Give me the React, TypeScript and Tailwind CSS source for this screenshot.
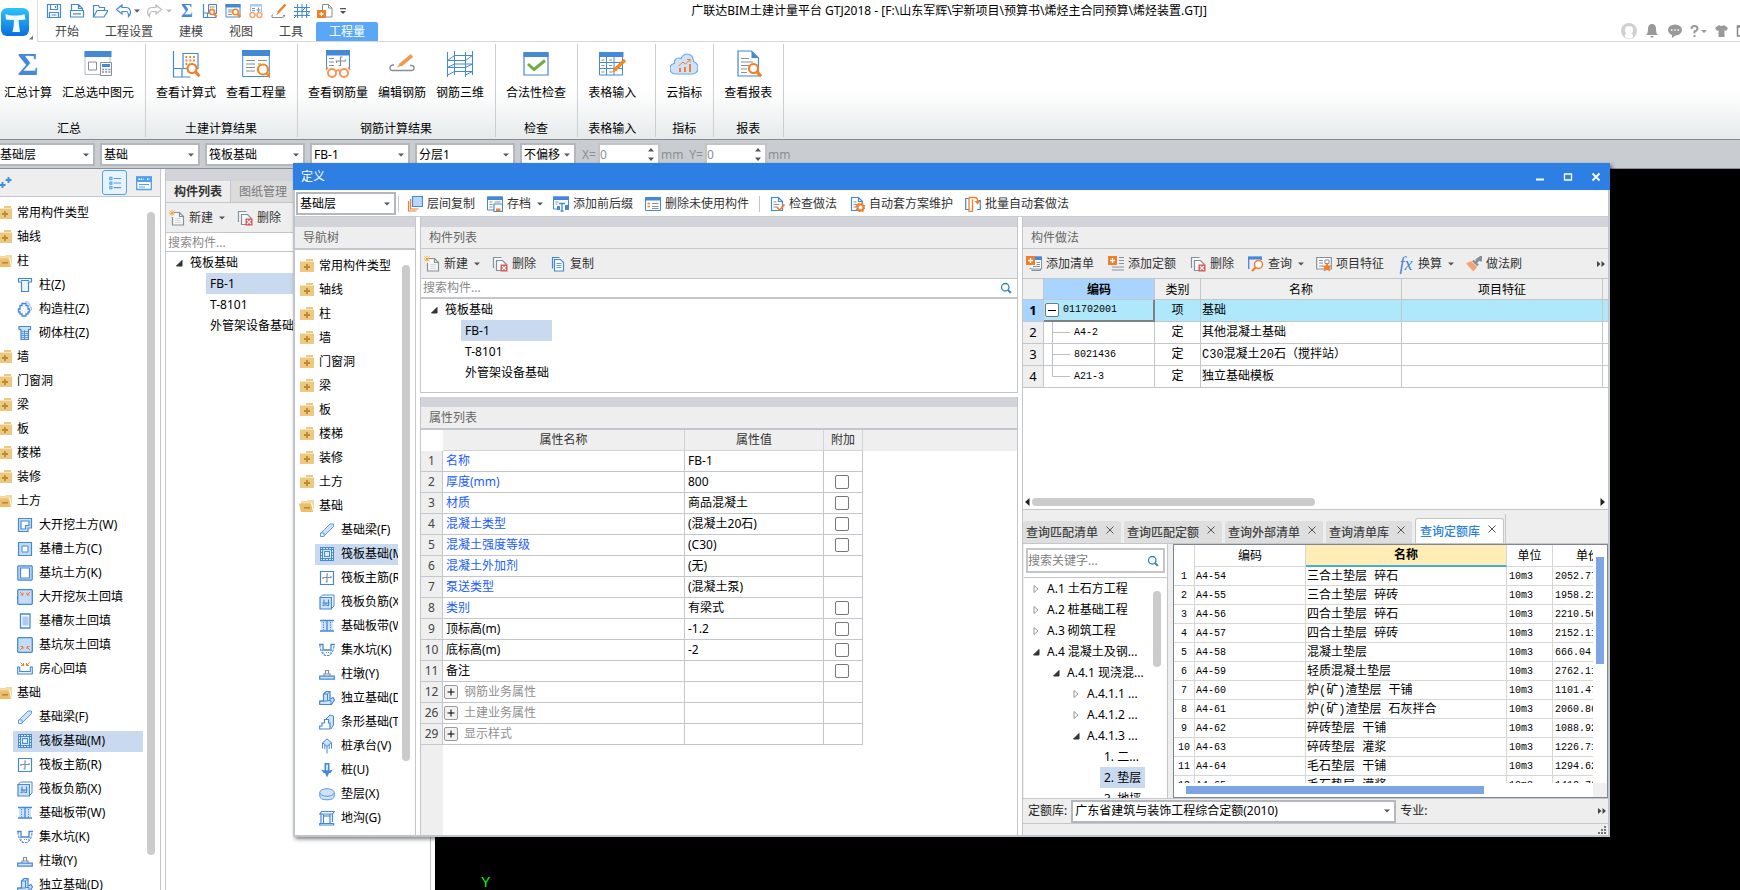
import type { ReactNode } from 'react';

const B = '#4488d8';
const L = '#cfe2f8';
const O = '#f07f2a';
const G = '#84909a';

const uiFont = "font-['Noto_Sans','Noto_Sans_CJK_SC',sans-serif]";
const gridFont = "font-['Liberation_Mono','Noto_Sans_CJK_SC',monospace]";

/* ---------- small icons, 16 x 16 ---------- */

const lens = (x: number, y: number, r: number, c = O) => (
  <g fill="none" stroke={c}>
    <circle cx={x} cy={y} r={r} fill="#fff" strokeWidth="1.6" />
    <path d={`M${x + r * 0.7} ${y + r * 0.7}l3 3`} strokeWidth="2.2" />
  </g>
);
const redX = (
  <g>
    <path d="M8.500 8.500h7v7h-7z" fill="#d9534f" />
    <path d="M10 10l4 4M14 10l-4 4" stroke="#fff" strokeWidth="1.2" />
  </g>
);
const plusBox = (
  <g>
    <path d="M0 0h9v9H0z" fill={O} />
    <path d="M4.500 2v5M2 4.500h5" stroke="#fff" strokeWidth="1.4" />
  </g>
);
const foldedPage = (
  <path d="M2.500 1.500h7l4 4v9h-11zM9.500 1.500v4h4" fill="#fff" stroke={B} strokeWidth="1.2" />
);

const icons: Record<string, ReactNode> = {
  closed: (
    <g>
      <path d="M7 1h7v2H7zM1 3.500h14v10.500H1z" fill="#edc880" />
      <path d="M8 6v6M5 9h6" stroke="#bf8a2e" strokeWidth="1.800" />
    </g>
  ),
  open: (
    <g>
      <path d="M2 3h6l1-1h6v11H2z" fill="#f3d9a2" />
      <path d="M0 5.500h12l2 8.500H2z" fill="#eabf6c" />
      <path d="M12.500 5l2 8" stroke="#fff" />
      <path d="M5 9.800h6" stroke="#bf8a2e" strokeWidth="1.600" />
    </g>
  ),
  save: (
    <g fill="none" stroke={B} strokeWidth="1.200">
      <path d="M1.500 1.500h13v13h-13zM4.500 1.500v5h7v-5M3.500 14.500v-5h9v5" />
      <path d="M9.500 3v2M5.500 12h5" />
    </g>
  ),
  newdoc: (
    <g fill="none" stroke={B} strokeWidth="1.200">
      <path d="M2.500 7V1.500h7l4 4V7M9.500 1.500v4h4M1.500 7.500h13v6.500h-13zM4 10.800h8" />
    </g>
  ),
  folder: (
    <path d="M1.500 14V2.500h5l1 2h5v3M1.500 14l3.500-6.500h11L12 14z" fill="none" stroke={B} strokeWidth="1.200" />
  ),
  undo: (
    <path d="M7 2L1.500 6.500 7 11V8.500h4q2.500 0 2.500 5 2-2 2-4.500-.5-4.500-4.500-4.500H7z" fill="none" stroke={B} strokeWidth="1.200" />
  ),
  redo: (
    <path d="M9 2l5.500 4.500L9 11V8.500H5q-2.500 0-2.500 5-2-2-2-4.500Q1 4.500 5 4.500h4z" fill="none" stroke="#bbbbbb" strokeWidth="1.200" />
  ),
  formula: (
    <g>
      <path d="M1.500 1v13.500h13M1.500 10h4v4" fill="none" stroke={B} strokeWidth="1.200" />
      <path d="M6.500 1.500h8v9h-8z" fill="#eef4fb" stroke={B} />
      <path d="M8 4h5M8 6.500h3" stroke={O} strokeWidth="1.300" strokeDasharray="1.300 1" />
      {lens(10, 9, 2.5)}
    </g>
  ),
  quantity: (
    <g>
      <path d="M1 1.500h14v12.500H1z" fill="#fff" stroke={B} />
      <path d="M.5 1h15v3.500H.5z" fill={B} />
      <path d="M3 7h5M3 9h4M3 11.500h4" stroke={G} />
      {lens(10.5, 9, 2.8, '#f08a1e')}
    </g>
  ),
  glasses: (
    <g fill="none">
      <path d="M2.500 9V1.500h11V9" stroke="#9fc2e8" />
      <path d="M2 1h12v2.500H2z" fill="#a9cbf0" />
      <path d="M4 5.500h3M4 7.500h3M10.500 4.500v5M8.500 7h4" stroke={G} />
      <circle cx="4.500" cy="12" r="2.500" stroke="#f5a56e" strokeWidth="1.400" />
      <circle cx="11.500" cy="12" r="2.500" stroke="#f5a56e" strokeWidth="1.400" />
      <path d="M7 12h2" stroke="#f5a56e" />
    </g>
  ),
  pen: (
    <g fill="none">
      <path d="M2 12h-1v2.500h9q4 0 4-2h-2" stroke={G} />
      <path d="M14.500 1.500L7 9.500" stroke={O} strokeWidth="2.400" />
      <path d="M7 9l-2 3 3-1.500z" fill={O} />
    </g>
  ),
  mesh: (
    <path d="M3.500 1v14M8 1v14M12.500 1v14M0 4.500h16M0 8.500h16M0 12.500h16M0 15L4 11M7.500 8.500l5-5M12 13l3.500-4" fill="none" stroke={B} />
  ),
  export: (
    <g>
      <path d="M5.500 7V1.500h6l3.500 3.500v9h-6M11.500 1.500V5H15" fill="none" stroke={G} />
      <path d="M0 7h9v8H0z" fill={O} />
      <path d="M4.500 9v4M2.500 11h4" stroke="#fff" strokeWidth="1.300" />
    </g>
  ),
  listview: (
    <g fill="none" stroke="#4ea0f0" strokeWidth="1.200">
      <path d="M2 1.500h2.500V4H2zM2 6.800h2.500v2.500H2zM2 12h2.500v2.500H2zM6.500 2.800H15M6.500 8H15M6.500 13.300H15" />
    </g>
  ),
  cardview: (
    <g>
      <path d="M.7 2h14.600v12.500H.7z" fill="#fff" stroke="#4ea0f0" strokeWidth="1.300" />
      <path d="M0 1.500h16v5.500H0z" fill="#4ea0f0" />
      <path d="M2.500 4.200h5M11 4.200h2.500" stroke="#fff" strokeWidth="1.500" strokeDasharray="1.500 .7" />
      <path d="M3 9.500h10M3 12h6" stroke="#4ea0f0" />
    </g>
  ),
  sparkle: (
    <path d="M10.500 2v6M7.500 5h6M4.500 7v6M1.500 10h6" stroke="#3f8fe0" strokeWidth="2" />
  ),
  create: (
    <g>
      <path d="M4.500 2.500h6l4 4v8.500H3.500V7" fill="#f7f8f9" stroke={G} strokeWidth="1.200" />
      <path d="M10.500 2.500v4h4" fill="none" stroke={G} strokeWidth="1.200" />
      <path d="M6 8.500h6M6 10.500h6M6 12.500h6" stroke="#d5d9dc" />
      <path d="M.5 .5l5 5M5.500 .5l-5 5M3 0v6M0 3h6" stroke="#f0a020" strokeWidth="1" strokeDasharray="1.300 .5" />
    </g>
  ),
  remove: (
    <g>
      <path d="M1.500 12V1.500h8M4.500 14.500v-10h6l3.500 3.500v6.500z" fill="#f7f8f9" stroke={G} strokeWidth="1.200" />
      {redX}
    </g>
  ),
  copy: (
    <g fill="#fff" stroke={B} strokeWidth="1.200">
      <path d="M2.500 12.500v-11h7" fill="none" />
      <path d="M4.500 3.500h6l3 3v8.500h-9z" />
      <path d="M6.500 7.500h5M6.500 9.500h5M6.500 11.500h5" stroke="#5b9be3" />
    </g>
  ),
  layercopy: (
    <g fill="none">
      <path d="M1.500 5v10h8" stroke={O} strokeWidth="1.200" />
      <path d="M3.500 3v10h8" stroke={O} strokeWidth="1.200" />
      <path d="M5.500 .5h10v10h-10z" fill="#bcd8f8" stroke={B} strokeWidth="1.200" />
    </g>
  ),
  archive: (
    <g>
      <path d="M.5 1h15v13H.5z" fill="#fff" stroke={B} />
      <path d="M0 .5h16v3.500H0z" fill={B} />
      <path d="M2.500 6h3M7.500 6h6M2.500 8.500h3M2.500 11h3" stroke={G} />
      <path d="M7 8h8.500v7.500H7z" fill="#fff" stroke={B} strokeWidth="1.200" />
      <path d="M9 12.500h4.500V15H9z" fill={O} />
    </g>
  ),
  affix: (
    <g>
      <path d="M.5 1h15v8M.5 1v12h5" fill="none" stroke={B} />
      <path d="M0 .5h16V4H0z" fill={B} />
      <path d="M2.500 6h3M2.500 8h2" stroke={G} />
      <path d="M6 7.500h6M9 7.500V15M7.500 15h3" stroke={B} strokeWidth="1.300" />
      <path d="M4 10h3v4H4zM12 9h4v5h-4z" fill={B} />
    </g>
  ),
  unused: (
    <g>
      <path d="M.5 2h15v12.500H.5z" fill="#fff" stroke={B} />
      <path d="M0 1h16v3.500H0z" fill={B} />
      <path d="M2.500 7.500h2.500M2.500 10.500h2.500" stroke={O} strokeWidth="1.500" />
      <path d="M7 7.500h6.500M7 10.500h6.500M7 12.500h6.500" stroke={G} />
    </g>
  ),
  check: (
    <g>
      {foldedPage}
      <path d="M4.500 6h3M4.500 8.500h6M4.500 11h4" stroke={G} />
      <path d="M8 11l2.500 3 5-5.500" fill="none" stroke={O} strokeWidth="1.600" />
    </g>
  ),
  scheme: (
    <g>
      {foldedPage}
      <path d="M4.500 6h3M4.500 8.500h4M4.500 11h3" stroke={G} />
      <circle cx="11.500" cy="11.500" r="3" fill="#fff" stroke={O} strokeWidth="2" />
      <circle cx="11.500" cy="11.500" r="4.300" fill="none" stroke={O} strokeWidth="1.400" strokeDasharray="1.700 1.700" />
    </g>
  ),
  batch: (
    <g fill="none">
      <path d="M4 2.500H.7v11H4M12 5l3.300-.5v9H12" stroke={B} strokeWidth="1.200" />
      <path d="M4 1.500h6q2.500 0 2.500 3.500M4 1.500v14h3.500V3.500" stroke={O} strokeWidth="1.300" />
      <path d="M9.500 5h6l-3 3.500z" fill={O} />
    </g>
  ),
  addlist: (
    <g>
      <path d="M5.500 14.500h9v-9M3.500 12.500h9" fill="none" stroke={G} />
      <path d="M9 1h6.500v12H5" fill="#fff" stroke={G} />
      <path d="M9 .5h7V4H9z" fill={B} />
      <path d="M10.500 6.500h3.500M10.500 8.500h3.500M7 10.500h7" stroke={G} />
      {plusBox}
    </g>
  ),
  addquota: (
    <g>
      <path d="M11 1.500h5M11 4.500h5M11 7.500h5M4 11h12M4 14h12" stroke={G} strokeWidth="1.200" />
      {plusBox}
    </g>
  ),
  query: (
    <g>
      <path d="M.7 13V1.500h12.500V4" fill="none" stroke={B} strokeWidth="1.300" />
      <path d="M0 .5h14v3H0z" fill={B} />
      <circle cx="10.500" cy="8.500" r="4" fill="#fff" stroke={O} strokeWidth="1.500" />
      <path d="M7.500 11.500L4 15" stroke={O} strokeWidth="2.200" />
    </g>
  ),
  feature: (
    <g>
      <path d="M.7 1.500h14.600v11.500H.7z" fill="#fff" stroke={G} strokeWidth="1.200" />
      <path d="M3 4.500h4M3 7h4M3 10h4" stroke={G} />
      <path d="M9 4h4v3.500H9z" fill="none" stroke={G} />
      <path d="M11 6.500l1.500 3 3.500.3-2.500 2.300.8 3.400-3.300-1.700-3.300 1.700.8-3.400L6 9.800l3.500-.3z" fill={O} />
    </g>
  ),
  brush: (
    <g>
      <path d="M5 5l6 6-3.500 4.500L0 7.500z" fill="#f9a071" />
      <path d="M7 4.500l5 5" stroke={G} strokeWidth="2.400" />
      <path d="M9.500 6.500L14 2.500M12 3l3-2v3z" stroke={G} strokeWidth="2.600" />
    </g>
  ),
  search: (
    <g fill="none" stroke="#2e86c1">
      <circle cx="7" cy="7" r="5" strokeWidth="1.700" />
      <path d="M10.500 10.500l4 4" strokeWidth="2.800" />
    </g>
  ),
  column: (
    <path d="M1.500 1.500h13v3.500h-3v9.500h-7V5h-3zM4 3.500h8" fill="#eef5fd" stroke={B} strokeWidth="1.200" />
  ),
  structcol: (
    <g fill="none" stroke={B}>
      <path d="M5 2.500h4v2h2V8h1.500v3H11v2H9v2H5v-2H3v-2H1.500V8H3V4.500h2z" strokeWidth="1.300" fill="#f6faff" />
      <path d="M8 .8h3v2h2v3.500h1.500v3H13" stroke="#9cc3ee" />
    </g>
  ),
  masonry: (
    <g>
      <path d="M2 1.500h11.500v3h-2v10h-7.500v-10H2z" fill={L} stroke={B} strokeWidth="1.200" />
      <path d="M4 6.500h7.500M4 8.500h7.500M4 10.500h7.500M4 12.500h7.500M7.500 5v9" stroke={B} strokeWidth=".8" />
    </g>
  ),
  bigdig: (
    <g stroke={B} strokeWidth="1.200" fill="none">
      <path d="M1.500 1.500h13V11H11v3.500H1.500z" fill={L} />
      <path d="M4 4h8v4.500H8.500V12H4z" fill="#fff" />
    </g>
  ),
  trench: (
    <g stroke={B}>
      <path d="M1.500 1.500h13v13h-13z" fill="#c4dcf7" strokeWidth="1.200" />
      <path d="M5 5h6v6H5z" fill="#fff" />
    </g>
  ),
  pit: (
    <g stroke={B}>
      <path d="M1.500 .8h13l.7.700v13l-.7.700h-13l-.7-.7v-13z" fill="#c4dcf7" strokeWidth="1.200" />
      <path d="M3.500 3h9v10h-9z" fill="#fff" strokeWidth="1.200" />
    </g>
  ),
  bigfill: (
    <g>
      <rect x=".7" y=".7" width="14.600" height="14.600" rx="1" fill="#c4dcf7" stroke={B} strokeWidth="1.300" />
      <path d="M3 3l3 3M13 3l-3 3M6 3.500V6H3.500M10 3.500V6h2.500" fill="none" stroke={O} />
    </g>
  ),
  trenchfill: (
    <g>
      <path d="M3.500 1h9.500v14H3.500z" fill="#fff" stroke={B} strokeWidth="1.300" />
      <path d="M5.500 4h6M5.500 6h6M5.500 8h6M5.500 10h6M5.500 12h6" stroke={B} strokeDasharray="1 1" />
      <path d="M6.500 5h5M6.500 7h5M6.500 9h5M6.500 11h5" stroke={B} strokeDasharray="1 1" />
    </g>
  ),
  pitfill: (
    <g>
      <rect x=".7" y=".7" width="14.600" height="14.600" rx="1" fill="#c4dcf7" stroke={B} strokeWidth="1.300" />
      <path d="M3 13l3-3M13 13l-3-3M3.500 9.500H6V12M12.500 9.500H10V12" fill="none" stroke={O} />
    </g>
  ),
  roomfill: (
    <g fill="none">
      <path d="M.7 6v7h14.600V6h-2v4.500H2.700V6z" fill="#eaf3fd" stroke={B} strokeWidth="1.100" />
      <path d="M3.500 1.500l3 3M12.500 1.500l-3 3M6.500 2v2.500H4M9.500 2v2.500H12" stroke={O} />
    </g>
  ),
  beam: (
    <g fill={L} stroke="#5b9be3">
      <path d="M1.500 11.500L11 2h3.500v2.500L5 14z" />
      <path d="M1.500 11h3.500v3.500H1.500z" fill="#fff" />
    </g>
  ),
  raft: (
    <g fill="none" stroke={B} shapeRendering="crispEdges">
      <path d="M1.500 1.500h13v13h-13z" fill="#dfebfa" />
      <path d="M5.500 5.500h5v5h-5z" />
      <path d="M3.500 1v14M12.500 1v14M1 3.500h14M1 12.500h14M6.500 1v3M9.500 1v3M6.500 12v3M9.500 12v3M1 6.500h3M1 9.500h3M12 6.500h3M12 9.500h3" />
    </g>
  ),
  mainbar: (
    <g fill="none">
      <path d="M1.500 1.500h13v13h-13z" fill="#fff" stroke={B} strokeWidth="1.200" />
      <path d="M4 9V7.500h8V6M9 4H8v8H6.500" stroke={G} strokeWidth="1.200" />
    </g>
  ),
  negbar: (
    <g fill="none" stroke={B}>
      <path d="M1 3.500h11.500v11.500H1z" fill={L} strokeWidth="1.200" />
      <path d="M1 3.500l2.500-2.500H15v11l-2.500 2.500" />
      <path d="M5 5.500v6H3.500M9.500 5.500v6H8M3.500 9h7M7 9v3" strokeWidth="1.100" />
    </g>
  ),
  band: (
    <g fill="none" stroke={B}>
      <path d="M2 2.500h12v10.500H2z" fill={L} stroke="none" />
      <path d="M1 2.500h14M1 13h14M8 2.500v10.500" strokeWidth="1.300" />
      <path d="M4.500 4v8M11.500 4v8" strokeDasharray="1.200 1.200" />
    </g>
  ),
  sump: (
    <g fill="none">
      <path d="M0 2.500h4v5.500h8V2.500h4" stroke={B} strokeWidth="1.300" />
      <path d="M1 3q0 7 5 10.500h4q5-3.500 5-10.500" stroke={B} strokeWidth="1.100" strokeDasharray="2.500 1" />
      <path d="M3 8l2 4M7 10.500h3M12.500 8.500l-1.500 3" stroke={G} strokeDasharray="1 1" />
    </g>
  ),
  pier: (
    <g fill="#fff">
      <path d="M6.500 8V4.500h3V8M5 10V8h6v2" stroke={G} strokeWidth="1.200" />
      <path d="M.7 10.200h14.600v3H.7z" fill={L} stroke={B} strokeWidth="1.200" />
    </g>
  ),
  footing: (
    <g fill={L} stroke={B}>
      <path d="M4.500 10V4l2.500-2.500h4V9l3-1.500 1.500 2.500-3 4.500H.7V11H4.500z" strokeWidth="1.200" />
      <path d="M4.500 4h4v6.500h3.500v4M8.500 4L11 1.500M.7 11h8" fill="none" />
    </g>
  ),
  strip: (
    <g fill="#fff" stroke={B}>
      <path d="M7 5l4-4 3.500 1v9L12 15" fill={L} />
      <path d="M.7 15v-3H3V9h2.500V5.500H9.500V9H11v6z" strokeWidth="1.200" />
    </g>
  ),
  pilecap: (
    <g fill={L} stroke={B}>
      <path d="M8 .8l4.500 4-4.500 3.500-4.500-3.500z" />
      <path d="M3.500 5v5.500M12.500 5v5.500M8 8v7.500M5.800 7v4M10.200 7v4" fill="none" />
    </g>
  ),
  pile: (
    <g fill={B}>
      <path d="M5.500 1h5v8h-5z" />
      <path d="M7 2.500h2v6H7z" fill={L} />
      <path d="M2 7.500l3.500 1h5l3.500-1-2.500 3.500H10L8 15.500 6 11H4.500z" />
    </g>
  ),
  cushion: (
    <g fill={L} stroke="#5b9be3">
      <path d="M.8 6.500v3.500q0 3.800 7.200 3.800t7.200-3.800V6.500" />
      <ellipse cx="8" cy="6.500" rx="7.200" ry="3.800" />
    </g>
  ),
  ditch: (
    <g fill="#fff" stroke={B} strokeWidth="1.200">
      <path d="M.7 4l2-2.500h12.600l-2 2.500zM2 4v9.500M4.500 4v9.500M11 4v9.500M13.500 4v8M.7 13.500V15h14v-1.500z" />
      <path d="M4.500 6h6.500" />
    </g>
  ),
};

function Icon({ name, className = 'size-4' }: { name: string; className?: string }) {
  return (
    <svg viewBox="0 0 16 16" className={`shrink-0 ${className}`} aria-hidden="true">
      {icons[name]}
    </svg>
  );
}

function Caret({ color = '#555' }: { color?: string }) {
  return (
    <svg viewBox="0 0 6 4" className="h-1 w-1.5 shrink-0" aria-hidden="true">
      <path d="M0 .5h6L3 3.500z" fill={color} />
    </svg>
  );
}

function More() {
  return (
    <svg viewBox="0 0 8 6" className="h-1.5 w-2 shrink-0" aria-hidden="true">
      <path d="M0 0l3.500 3L0 6zM4.500 0L8 3 4.500 6z" fill="#444" />
    </svg>
  );
}

/* ---------- ribbon icons, 28 x 28 ---------- */

const bigLens = (x: number, y: number, r: number, c = O) => (
  <g stroke={c}>
    <circle cx={x} cy={y} r={r} fill="#fff" strokeWidth="2.200" />
    <path d={`M${x + r * 0.8} ${y + r * 0.8}l4 4`} strokeWidth="3" />
  </g>
);

const bigIcons: Record<string, ReactNode> = {
  selected: (
    <g>
      <path d="M1 2h25v22.500H1z" fill="#fff" stroke="#b4bcc4" />
      <path d="M.5 1h27v6H.5z" fill={B} />
      <path d="M4.500 12h8v8h-8z" fill="none" stroke={G} />
      <path d="M16.500 12.500h11v13h-11z" fill="#fff" stroke={G} />
      <path d="M18 14h8v3h-8z" fill={B} />
      <path d="M18 19.500h8.500M18 22h8.500" stroke={G} strokeWidth="1.300" strokeDasharray="2 1.200" />
    </g>
  ),
  formula: (
    <g fill="none">
      <path d="M1.500 1v26h17M1.500 18.500h8.500V27" stroke={B} strokeWidth="1.200" />
      <path d="M11 3.500h15v15H11z" stroke={B} strokeWidth="1.200" />
      <path d="M13.500 7h10M13.500 10.500h10M13.500 14h5" stroke={O} strokeWidth="1.800" strokeDasharray="1.800 2" />
      {bigLens(20, 18.5, 4.5)}
    </g>
  ),
  quantity: (
    <g>
      <path d="M.7 1h26.600v25.500H.7z" fill="#fff" stroke={B} />
      <path d="M0 0h28v6H0z" fill={B} />
      <path d="M4 10.500h9M16 10.500h9M4 14h9M4 17.500h9M4 21h9M16 14h3" stroke={G} strokeWidth="1.200" />
      {bigLens(21, 19.5, 5, '#f08a1e')}
    </g>
  ),
  rebar: (
    <g fill="none">
      <path d="M2.500 19V1h23v18" fill="#fff" stroke={B} />
      <path d="M2 0h24v5.500H2z" fill={B} />
      <path d="M5 8.500h5M5 12h5M5 15.500h5M12.500 13v-2h9v-1.500M18.500 7h-2v8.500h-2" stroke={G} strokeWidth="1.200" />
      <path d="M2 20l2-2.500M26 20l-2-2.500M12 21q2-1.500 4 0" stroke="#f59555" strokeWidth="1.800" />
      <circle cx="8" cy="23" r="4" fill="#fff" stroke="#f59555" strokeWidth="2" />
      <circle cx="20" cy="23" r="4" fill="#fff" stroke="#f59555" strokeWidth="2" />
    </g>
  ),
  edit: (
    <g fill="none">
      <path d="M6 15H4.500Q2 15.500 2 18t2.500 2.500h19Q26 20.500 26 18t-2.500-2.500H22" stroke={G} strokeWidth="1.300" />
      <path d="M24 5.500L12.500 15" stroke="#f39a50" strokeWidth="3.600" />
      <path d="M12 13l-3 4.500 5-2z" fill="#f39a50" />
    </g>
  ),
  three: (
    <path
      d="M1.500 2v25M8.500 1v24M19.500 2v25M26.500 1v24M8.500 5.500h18M8.500 14h18M8.500 21.500h18M1.500 10.500h18M1.500 17.500h18M1.500 10.500l7-5M19.500 10.500l7-5M1.500 17.500l7-3.500M19.500 17.500l7-3.500M1.500 25l7-3.500M19.500 25l7-3.500"
      fill="none"
      stroke={B}
    />
  ),
  legal: (
    <g>
      <path d="M2 3h24v22H2z" fill="#fff" stroke={B} strokeWidth="1.200" />
      <path d="M1.500 2h25v5h-25z" fill={B} />
      <path d="M6 14l6 5.500L23 10.500" fill="none" stroke="#6fad46" strokeWidth="3" />
    </g>
  ),
  table: (
    <g>
      <path d="M1.500 3h23v22h-23z" fill="#fff" stroke={B} />
      <path d="M1 2h24.500v5H1z" fill={B} />
      <path d="M1 12.500h24M1 18.500h24M8.500 7v18M16 7v18" stroke={B} />
      <path d="M3.500 10h3M3.500 15.500h3M3.500 22h3M11 10h3M11 15.500h3M11 22h3" stroke={G} />
      <path d="M27 10L17 19.500" stroke="#f08a1e" strokeWidth="3.600" />
      <path d="M16.500 17.500L14 22.500l5.500-2z" fill="#f08a1e" />
    </g>
  ),
  cloud: (
    <g>
      <path d="M6.500 24Q0 24 0 18.500 0 14 4.500 13.500 4 8 9 8q1 0 2 .5Q13 4 17 4q6 0 6.500 7.500Q28 13 28 18t-5 6z" fill={L} stroke="#6ea8ea" strokeWidth="1.200" />
      <path d="M10 22v-4M15 22v-5M20 22v-8" stroke={O} strokeWidth="2" />
      <path d="M8.500 16l4.500-4 2.500 2L20 9.500M17 9.500h3v3" fill="none" stroke={O} />
    </g>
  ),
  report: (
    <g>
      <path d="M4 1h13.500l7 7v18H4z" fill="#fff" stroke={B} strokeWidth="1.200" />
      <path d="M17.500 1v7h7z" fill={B} />
      <path d="M7 8.500h8M7 12h12M7 15.500h8M7 19h6M7 22.500h6" stroke={G} />
      {bigLens(19.5, 18.5, 4.5)}
    </g>
  ),
};

/* ---------- shared controls ---------- */

function Combo({ label, value, className }: { label: string; value: string; className: string }) {
  return (
    <div className={`grid h-[23px] items-center border-2 border-[#b4b7bb] bg-white text-black ${className}`}>
      <select
        aria-label={label}
        className="col-start-1 row-start-1 h-full w-full min-w-0 appearance-none bg-transparent pl-0.5 text-xs outline-none"
      >
        <option>{value}</option>
      </select>
      <span className="pointer-events-none col-start-1 row-start-1 mr-1 justify-self-end">
        <Caret />
      </span>
    </div>
  );
}

function Offset({ axis }: { axis: string }) {
  return (
    <div className="flex items-center gap-px text-[#8c8f93]">
      <label className="flex items-center gap-px">
        <span className="w-4 text-center">{axis}=</span>
        <span className="flex h-[23px] w-[62px] items-center border-2 border-[#c2c4c8] bg-white pr-1">
          <input defaultValue="0" className="w-full min-w-0 bg-transparent text-xs outline-none" />
          <svg viewBox="0 0 6 13" className="h-[13px] w-1.5 shrink-0" aria-hidden="true">
            <path d="M0 3.500h6L3 0zM0 9.500h6L3 13z" fill="#555" />
          </svg>
        </span>
      </label>
      <span className="w-[22px]">mm</span>
    </div>
  );
}

type Tool = { icon: string; label: string; caret?: boolean; sep?: boolean };

function ToolButton({ icon, label, caret }: Tool) {
  return (
    <button className="flex shrink-0 items-center gap-1 whitespace-nowrap">
      {icon === 'fx' ? (
        <span className="w-4 font-['Liberation_Serif',serif] text-lg/4 italic text-[#3f84d6]">fx</span>
      ) : (
        <Icon name={icon} />
      )}
      <span>{label}</span>
      {caret && (
        <span className="-mr-0.5 ml-0.5 flex">
          <Caret />
        </span>
      )}
    </button>
  );
}

type Node = { icon: string; label: string; child?: boolean; on?: boolean };
const f = (label: string): Node => ({ icon: 'closed', label });
const o = (label: string): Node => ({ icon: 'open', label });
const c = (icon: string, label: string, on = false): Node => ({ icon, label, child: true, on });

const foundation: Node[] = [
  o('基础'),
  c('beam', '基础梁(F)'),
  c('raft', '筏板基础(M)', true),
  c('mainbar', '筏板主筋(R)'),
  c('negbar', '筏板负筋(X)'),
  c('band', '基础板带(W)'),
  c('sump', '集水坑(K)'),
  c('pier', '柱墩(Y)'),
  c('footing', '独立基础(D)'),
];

const leftTree: Node[] = [
  f('常用构件类型'),
  f('轴线'),
  o('柱'),
  c('column', '柱(Z)'),
  c('structcol', '构造柱(Z)'),
  c('masonry', '砌体柱(Z)'),
  f('墙'),
  f('门窗洞'),
  f('梁'),
  f('板'),
  f('楼梯'),
  f('装修'),
  o('土方'),
  c('bigdig', '大开挖土方(W)'),
  c('trench', '基槽土方(C)'),
  c('pit', '基坑土方(K)'),
  c('bigfill', '大开挖灰土回填'),
  c('trenchfill', '基槽灰土回填'),
  c('pitfill', '基坑灰土回填'),
  c('roomfill', '房心回填'),
  ...foundation,
];

const dialogTree: Node[] = [
  ...['常用构件类型', '轴线', '柱', '墙', '门窗洞', '梁', '板', '楼梯', '装修', '土方'].map(f),
  ...foundation,
  c('strip', '条形基础(T)'),
  c('pilecap', '桩承台(V)'),
  c('pile', '桩(U)'),
  c('cushion', '垫层(X)'),
  c('ditch', '地沟(G)'),
];

function NavTree({ nodes, className }: { nodes: Node[]; className: string }) {
  return (
    <ul className={`min-h-0 min-w-0 flex-1 overflow-hidden pt-1 text-black ${className}`}>
      {nodes.map((n) => (
        <li key={n.label} className="flex h-6 items-center">
          {n.child ? (
            <button
              className={`ml-4 flex h-[21px] flex-1 items-center gap-1.5 overflow-hidden whitespace-nowrap pl-1 ${n.on ? 'bg-[#c8d9f0]' : ''}`}
            >
              <Icon name={n.icon} />
              <span>{n.label}</span>
            </button>
          ) : (
            <button className="flex items-center gap-1 whitespace-nowrap">
              <Icon name={n.icon} />
              <span>{n.label}</span>
            </button>
          )}
        </li>
      ))}
    </ul>
  );
}

function Expanded() {
  return (
    <svg viewBox="0 0 8 8" className="size-2 shrink-0" aria-hidden="true">
      <path d="M7 1.500v5.500H1.500z" fill="#333" stroke="#333" />
    </svg>
  );
}

function Collapsed() {
  return (
    <svg viewBox="0 0 8 8" className="size-2 shrink-0" aria-hidden="true">
      <path d="M2 .5v7L6 4z" fill="#fff" stroke="#999" />
    </svg>
  );
}

function ComponentTree({ wide }: { wide?: boolean }) {
  return (
    <ul className="text-black">
      <li className="flex h-[21px] items-center gap-[7px] pl-[9px]">
        <Expanded />
        筏板基础
      </li>
      {['FB-1', 'T-8101', '外管架设备基础'].map((t) => (
        <li key={t} className="flex h-[21px] pl-10">
          <button
            className={`whitespace-nowrap px-1 text-left ${wide ? 'flex-1' : 'w-[91px]'} ${t === 'FB-1' ? 'bg-[#c8d9f0]' : ''}`}
          >
            {t}
          </button>
        </li>
      ))}
    </ul>
  );
}

function PanelHead({ title }: { title: string }) {
  return (
    <div className="shrink-0">
      <div className="h-2.5 bg-[#d3d4d9]" />
      <h2 className="h-[22px] border-b border-[#c3c6cb] bg-[#eeeeee] pl-2 text-xs/[21px] text-[#666]">{title}</h2>
    </div>
  );
}

/* ---------- main window ---------- */

type Group = { name: string; pad: string; items: [string, string][] };

const groups: Group[] = [
  { name: '汇总', pad: 'pl-1 pr-[11px]', items: [['sigma', '汇总计算'], ['selected', '汇总选中图元']] },
  { name: '土建计算结果', pad: 'pl-2.5 pr-[11px]', items: [['formula', '查看计算式'], ['quantity', '查看工程量']] },
  { name: '钢筋计算结果', pad: 'pl-2.5 pr-[11px]', items: [['rebar', '查看钢筋量'], ['edit', '编辑钢筋'], ['three', '钢筋三维']] },
  { name: '检查', pad: 'pl-2.5 pr-[11px]', items: [['legal', '合法性检查']] },
  { name: '表格输入', pad: 'pl-2.5 pr-[19px]', items: [['table', '表格输入']] },
  { name: '指标', pad: 'pl-2.5 pr-[11px]', items: [['cloud', '云指标']] },
  { name: '报表', pad: 'pl-2.5 pr-[11px]', items: [['report', '查看报表']] },
];

function Header() {
  return (
    <header className="flex h-[42px] shrink-0 bg-white text-[#444]">
      <div className="flex w-[38px] items-end border-r border-[#dddddd] pb-0.5 pl-px">
        <svg viewBox="0 0 32 32" className="size-8" aria-label="GTJ" role="img">
          <defs>
            <linearGradient id="logo" x1="0" y1="0" x2="0" y2="1">
              <stop offset="0" stopColor="#2cc3f7" />
              <stop offset="1" stopColor="#0a6fe0" />
            </linearGradient>
          </defs>
          <rect x="0" y="0" width="28" height="28" rx="6" fill="url(#logo)" />
          <path d="M4.500 6q4 2 9.500 1.500 5.500.5 9.500-1.500l1 5.500q-4 .5-7 .5.500 6 1.500 12h-7.500q1.500-6 1.500-12-4 0-8-.5z" fill="#f2f8ff" />
          <path d="M32 27.500v4h-4z" fill="#777" />
        </svg>
      </div>
      <div className="flex min-w-0 flex-1 flex-col border-b border-[#d8d8d8]">
        <div className="flex h-[22px] items-center pl-2">
          <div className="flex items-center gap-[7px]">
            <Icon name="save" />
            <Icon name="newdoc" />
            <Icon name="folder" />
            <span className="flex items-center gap-[3px]">
              <Icon name="undo" />
              <Caret />
            </span>
            <span className="flex items-center gap-[3px]">
              <Icon name="redo" />
              <Caret color="#bbb" />
            </span>
            <span className="w-4 text-center font-['Liberation_Serif',serif] text-lg/4 font-bold text-[#4488d8]">Σ</span>
            <Icon name="formula" />
            <Icon name="quantity" />
            <Icon name="glasses" />
            <Icon name="pen" />
            <Icon name="mesh" />
            <Icon name="export" />
            <svg viewBox="0 0 6 8" className="h-2 w-1.5 shrink-0" aria-hidden="true">
              <path d="M0 1h6v1.200H0zM0 4h6L3 7z" fill="#555" />
            </svg>
          </div>
          <h1 className="flex-1 truncate pr-[188px] text-center text-xs/5 text-black">
            广联达BIM土建计量平台 GTJ2018 - [F:\山东军辉\宇新项目\预算书\烯烃主合同预算\烯烃装置.GTJ]
          </h1>
        </div>
        <nav className="flex flex-1 items-end justify-between">
          <div className="flex pl-1">
            {['开始', '工程设置', '建模', '视图', '工具', '工程量'].map((t) => (
              <button
                key={t}
                className={`h-[19px] px-[13px] pt-px ${t === '工程量' ? 'rounded-t-[2px] bg-[#5aa7f7] text-white' : ''}`}
              >
                {t}
              </button>
            ))}
          </div>
          <svg viewBox="0 0 119 18" className="h-[18px] w-[119px]" aria-hidden="true" fill="#999">
            <circle cx="8" cy="8" r="8" fill="#d0d0d0" />
            <circle cx="8" cy="7" r="4" fill="#fff" />
            <path d="M4 14q0-5 4-5t4 5q-4 3-8 0z" fill="#fff" />
            <path d="M25 12q2-1 2-6 0-5 4-5t4 5q0 5 2 6zM29 13h4l-2 2z" />
            <ellipse cx="54" cy="7" rx="7" ry="5.500" />
            <path d="M51 11v4l4-3z" />
            <path d="M50 7h1.500M53.300 7h1.500M56.500 7H58" stroke="#fff" strokeWidth="1.500" />
            <path d="M70.500 6q0-3 3-3t3 2.500q0 2-3 3v2" fill="none" stroke="#999" strokeWidth="2" />
            <path d="M72.500 12h2v2h-2zM80 7h6l-3 3z" />
            <path d="M94 5l4-3q2.500 2 5 0l4 3-2 3-1.500-1v7h-6V7L96 8z" />
            <path d="M119 3h-2.500v10h2.500M116.500 4h3" fill="none" stroke="#888" strokeWidth="1.500" />
          </svg>
        </nav>
      </div>
    </header>
  );
}

function Ribbon() {
  return (
    <section className="flex h-[98px] shrink-0 border-b border-[#858b92] bg-[linear-gradient(#ffffff_50%,#e6eaeb)] py-0.5 text-black">
      {groups.map((g) => (
        <div key={g.name} className={`flex flex-col border-r border-[#cccfd2] pt-1.5 ${g.pad}`}>
          <div className="flex gap-2.5">
            {g.items.map(([icon, label]) => (
              <button key={label} className="flex flex-col items-center gap-[5px] whitespace-nowrap leading-5">
                {icon === 'sigma' ? (
                  <span className="h-7 font-['Liberation_Serif',serif] text-[32px]/7 font-bold text-[#4488d8]">Σ</span>
                ) : (
                  <svg viewBox="0 0 28 28" className="size-7" aria-hidden="true">
                    {bigIcons[icon]}
                  </svg>
                )}
                <span>{label}</span>
              </button>
            ))}
          </div>
          <div className="mt-auto text-center leading-4">{g.name}</div>
        </div>
      ))}
    </section>
  );
}

function FilterBar() {
  return (
    <section className="flex h-[29px] shrink-0 items-center gap-[5px] border-b border-[#8a9099] bg-[#c9ccd0] pt-px">
      <Combo label="楼层" value="基础层" className="-ml-1 w-[99px]" />
      <Combo label="构件大类" value="基础" className="w-[100px]" />
      <Combo label="构件类型" value="筏板基础" className="w-[100px]" />
      <Combo label="构件" value="FB-1" className="w-[100px]" />
      <Combo label="分层" value="分层1" className="w-[100px]" />
      <Combo label="偏移" value="不偏移" className="w-14" />
      <Offset axis="X" />
      <Offset axis="Y" />
    </section>
  );
}

const editTools: Tool[] = [
  { icon: 'create', label: '新建', caret: true },
  { icon: 'remove', label: '删除' },
];

function Workspace() {
  return (
    <main className="flex min-h-0 flex-1 bg-white">
      <aside className="flex w-[161px] shrink-0 flex-col overflow-hidden border-r border-[#c3c6cb]">
        <div className="flex h-7 shrink-0 items-center border-b border-[#c3c6cb] bg-[#eeeeee]">
          <Icon name="sparkle" className="-ml-0.5 size-4" />
          <button aria-label="列表视图" className="ml-auto grid size-[25px] place-items-center rounded-[3px] border border-[#4ea0f0] bg-[#e9f3fd]">
            <Icon name="listview" className="size-3.5" />
          </button>
          <button aria-label="卡片视图" className="ml-[9px] mr-2">
            <Icon name="cardview" className="size-4" />
          </button>
        </div>
        <div className="flex min-h-0 flex-1">
          <NavTree nodes={leftTree} className="-ml-[3px]" />
          <div className="ml-1 mr-[5px] w-2 pt-[15px]">
            <div className="h-[643px] rounded-full bg-[#cbcbcb]" />
          </div>
        </div>
      </aside>
      <aside className="mx-1 flex w-[266px] shrink-0 flex-col border-x border-[#c3c6cb]">
        <div className="h-3 bg-[#d3d4d9]" />
        <div className="flex h-[22px] border-b border-[#c3c6cb] bg-[#dcdcdc] text-[#7b7b7b]">
          <button className="border-r border-[#c3c6cb] bg-[#eeeeee] px-2 font-bold text-[#333]">构件列表</button>
          <button className="px-2">图纸管理</button>
        </div>
        <div className="flex h-[30px] items-center gap-3.5 border-b border-[#c3c6cb] bg-[#eeeeee] pl-[3px] text-[#333]">
          {editTools.map((t) => (
            <ToolButton key={t.label} {...t} />
          ))}
        </div>
        <input
          aria-label="搜索构件"
          placeholder="搜索构件..."
          className="h-[19px] border-b border-[#c3c6cb] px-0.5 text-xs outline-none placeholder:text-[#8a8a8a]"
        />
        <ComponentTree wide />
      </aside>
      <div className="flex flex-1 items-end bg-black pl-[46px]">
        <span className="font-['Liberation_Sans',sans-serif] text-sm/4 text-[#00ff00]">Y</span>
      </div>
    </main>
  );
}

/* ---------- definition dialog ---------- */

const dialogTools: Tool[] = [
  { icon: 'layercopy', label: '层间复制' },
  { icon: 'archive', label: '存档', caret: true },
  { icon: 'affix', label: '添加前后缀' },
  { icon: 'unused', label: '删除未使用构件' },
  { icon: 'check', label: '检查做法', sep: true },
  { icon: 'scheme', label: '自动套方案维护' },
  { icon: 'batch', label: '批量自动套做法' },
];

const practiceTools: Tool[] = [
  { icon: 'addlist', label: '添加清单' },
  { icon: 'addquota', label: '添加定额' },
  { icon: 'remove', label: '删除' },
  { icon: 'query', label: '查询', caret: true },
  { icon: 'feature', label: '项目特征' },
  { icon: 'fx', label: '换算', caret: true },
  { icon: 'brush', label: '做法刷' },
];

type Prop = { n: number; name: string; value?: string; kind?: 'blue' | 'group'; box?: boolean };

const props: Prop[] = [
  { n: 1, name: '名称', value: 'FB-1', kind: 'blue' },
  { n: 2, name: '厚度(mm)', value: '800', kind: 'blue', box: true },
  { n: 3, name: '材质', value: '商品混凝土', kind: 'blue', box: true },
  { n: 4, name: '混凝土类型', value: '(混凝土20石)', kind: 'blue', box: true },
  { n: 5, name: '混凝土强度等级', value: '(C30)', kind: 'blue', box: true },
  { n: 6, name: '混凝土外加剂', value: '(无)', kind: 'blue' },
  { n: 7, name: '泵送类型', value: '(混凝土泵)', kind: 'blue' },
  { n: 8, name: '类别', value: '有梁式', kind: 'blue', box: true },
  { n: 9, name: '顶标高(m)', value: '-1.2', box: true },
  { n: 10, name: '底标高(m)', value: '-2', box: true },
  { n: 11, name: '备注', box: true },
  { n: 12, name: '钢筋业务属性', kind: 'group' },
  { n: 26, name: '土建业务属性', kind: 'group' },
  { n: 29, name: '显示样式', kind: 'group' },
];

const propName = { blue: 'text-[#1a5cff]', group: 'text-[#909090]', plain: 'text-black' };

function PropertyTable() {
  const cell = 'h-[21px] border-b border-r border-[#c3c6cb] p-0';
  return (
    <div className="flex min-h-0 flex-1 flex-col border-t border-[#c3c6cb] bg-white">
      <div className="flex bg-[#efefef]">
        <table className="w-[442px] table-fixed border-separate border-spacing-0">
          <colgroup>
            <col className="w-[22px]" />
            <col className="w-[242px]" />
            <col className="w-[139px]" />
            <col className="w-[39px]" />
          </colgroup>
          <thead>
            <tr className="text-[#333]">
              <th className="h-[21px] bg-white p-0" aria-label="序号" />
              {['属性名称', '属性值', '附加'].map((h) => (
                <th key={h} className="border-b border-r border-[#d2d4d8] bg-[#efefef] p-0 font-normal">
                  {h}
                </th>
              ))}
            </tr>
          </thead>
          <tbody className="bg-white text-black">
            {props.map((p) => (
              <tr key={p.n}>
                <td className={`${cell} bg-[#efefef] text-center text-[#444]`}>{p.n}</td>
                <td className={`${cell} ${propName[p.kind ?? 'plain']}`}>
                  {p.kind === 'group' ? (
                    <span className="flex items-center gap-1.5 pl-px">
                      <button
                        aria-label={`展开${p.name}`}
                        className="grid size-3.5 place-items-center rounded-[2px] border border-[#999] bg-[#f2f2f2]"
                      >
                        <svg viewBox="0 0 8 8" className="size-2" aria-hidden="true">
                          <path d="M4 .5v7M.5 4h7" stroke="#000" />
                        </svg>
                      </button>
                      {p.name}
                    </span>
                  ) : (
                    <span className="pl-[3px]">{p.name}</span>
                  )}
                </td>
                <td className={cell}>
                  <span className="pl-[3px]">{p.value}</span>
                </td>
                <td className={`${cell} pr-0.5`}>
                  {p.box && (
                    <input
                      type="checkbox"
                      aria-label={`附加${p.name}`}
                      className="mx-auto block size-3.5 appearance-none rounded-[2px] border border-[#777] bg-white"
                    />
                  )}
                </td>
              </tr>
            ))}
          </tbody>
        </table>
        <div className="mt-[21px] flex-1 bg-white" />
      </div>
      <div className="w-[22px] flex-1 bg-[#efefef]" />
    </div>
  );
}

const practiceRows = [
  ['011702001', '项', '基础'],
  ['A4-2', '定', '其他混凝土基础'],
  ['8021436', '定', 'C30混凝土20石（搅拌站）'],
  ['A21-3', '定', '独立基础模板'],
];

function PracticeTable() {
  const line = 'border-b border-r border-[#c3c6cb] p-0';
  return (
    <table className="w-full table-fixed border-separate border-spacing-0 text-black">
      <colgroup>
        <col className="w-[21px]" />
        <col className="w-[111px]" />
        <col className="w-[46px]" />
        <col className="w-[201px]" />
        <col className="w-[201px]" />
        <col />
      </colgroup>
      <thead>
        <tr className="bg-[#efefef]">
          <th className={`${line} h-[21px]`} aria-label="序号" />
          <th className={`${line} bg-[#a9d4ff] pt-px`}>编码</th>
          <th className={`${line} pt-px font-normal`}>类别</th>
          <th className={`${line} pt-px font-normal`}>名称</th>
          <th className={`${line} pt-px font-normal`}>项目特征</th>
          <th className={`${line} border-r-0`} aria-label="更多" />
        </tr>
      </thead>
      <tbody>
        {practiceRows.map(([code, kind, name], i) => (
          <tr key={code} className={i === 0 ? 'bg-[#afe8fb]' : 'bg-white'}>
            <td
              className={`${line} h-[22px] text-center text-[13px] ${i === 0 ? 'bg-[#a9d4ff] font-bold' : 'bg-[#efefef]'}`}
            >
              {i + 1}
            </td>
            <td
              className={`p-0 ${gridFont} text-[10px] ${i === 0 ? 'border-b-2 border-r-2 border-[#808080]' : 'border-b border-r border-[#c3c6cb]'}`}
            >
              <span className={`flex items-center ${i === 0 ? 'h-5' : 'h-[21px]'}`}>
                {i === 0 ? (
                  <button aria-label="折叠" className="ml-px mr-1 grid size-3.5 place-items-center rounded-[2px] border border-[#777] bg-white">
                    <span className="h-px w-2 bg-black" />
                  </button>
                ) : (
                  <svg viewBox="0 0 30 21" className="h-[21px] w-[30px]" aria-hidden="true">
                    <path
                      d={i === 3 ? 'M8.500 0v10.500H26' : 'M8.500 0v21M8.500 10.500H26'}
                      fill="none"
                      stroke="#bbbec2"
                    />
                  </svg>
                )}
                {code}
              </span>
            </td>
            <td className={`${line} ${gridFont} text-center`}>{kind}</td>
            <td className={`${line} ${gridFont} whitespace-nowrap pl-px`}>{name}</td>
            <td className={line} />
            <td className={`${line} border-r-0`} />
          </tr>
        ))}
      </tbody>
    </table>
  );
}

const quota = [
  ['A4-54', '三合土垫层 碎石', '2052.77'],
  ['A4-55', '三合土垫层 碎砖', '1958.21'],
  ['A4-56', '四合土垫层 碎石', '2210.56'],
  ['A4-57', '四合土垫层 碎砖', '2152.11'],
  ['A4-58', '混凝土垫层', '666.04'],
  ['A4-59', '轻质混凝土垫层', '2762.11'],
  ['A4-60', '炉(矿)渣垫层 干铺', '1101.47'],
  ['A4-61', '炉(矿)渣垫层 石灰拌合', '2060.86'],
  ['A4-62', '碎砖垫层 干铺', '1088.92'],
  ['A4-63', '碎砖垫层 灌浆', '1226.71'],
  ['A4-64', '毛石垫层 干铺', '1294.62'],
  ['A4-65', '毛石垫层 灌浆', '1412.76'],
];

function QuotaTable() {
  const line = 'border-b border-r border-[#d6d6d6] p-0';
  return (
    <div className="flex min-w-0 flex-1 flex-col border border-[#80868f] bg-white">
      <div className="flex min-h-0 flex-1">
        <div className="min-h-0 min-w-0 flex-1 overflow-hidden">
          <table className={`w-[450px] table-fixed border-separate border-spacing-0 text-black ${gridFont}`}>
            <colgroup>
              <col className="w-[21px]" />
              <col className="w-[111px]" />
              <col className="w-[201px]" />
              <col className="w-[46px]" />
              <col className="w-[71px]" />
            </colgroup>
            <thead>
              <tr>
                <th className="h-[22px] border-r border-[#d6d6d6] p-0" aria-label="序号" />
                <th className={`${line} pt-0.5 font-normal`}>编码</th>
                <th className="border-b-2 border-r border-b-[#45aed2] border-r-[#d6d6d6] bg-[#ffedb5] p-0 pt-0.5">名称</th>
                <th className={`${line} pt-0.5 font-normal`}>单位</th>
                <th className={`${line} pt-0.5 font-normal`}>单价</th>
              </tr>
            </thead>
            <tbody>
              {quota.map(([code, name, price], i) => (
                <tr key={code}>
                  <td className={`${line} h-[19px] pt-0.5 text-center text-[10px]`}>{i + 1}</td>
                  <td className={`${line} pl-px pt-0.5 text-[10px]`}>{code}</td>
                  <td className={`${line} whitespace-nowrap pl-px pt-0.5 leading-4`}>{name}</td>
                  <td className={`${line} pl-0.5 pt-0.5 text-[10px]`}>10m3</td>
                  <td className={`${line} pl-0.5 pt-0.5 text-[10px]`}>{price}</td>
                </tr>
              ))}
            </tbody>
          </table>
        </div>
        <div className="w-[14px] pl-[3px] pt-3">
          <div className="h-[107px] w-2 bg-[#7da5e3]" />
        </div>
      </div>
      <div className="flex h-3.5 shrink-0">
        <div className="flex-1 pl-3 pt-[3px]">
          <div className="h-2 w-[298px] bg-[#7da5e3]" />
        </div>
        <div className="w-3.5 bg-[#f0f0f0]" />
      </div>
    </div>
  );
}

const chapters: { label: string; level: number; state: 'open' | 'closed' | 'leaf'; on?: boolean }[] = [
  { label: 'A.1 土石方工程', level: 0, state: 'closed' },
  { label: 'A.2 桩基础工程', level: 0, state: 'closed' },
  { label: 'A.3 砌筑工程', level: 0, state: 'closed' },
  { label: 'A.4 混凝土及钢...', level: 0, state: 'open' },
  { label: 'A.4.1 现浇混...', level: 1, state: 'open' },
  { label: 'A.4.1.1 ...', level: 2, state: 'closed' },
  { label: 'A.4.1.2 ...', level: 2, state: 'closed' },
  { label: 'A.4.1.3 ...', level: 2, state: 'open' },
  { label: '1. 二...', level: 3, state: 'leaf' },
  { label: '2. 垫层', level: 3, state: 'leaf', on: true },
  { label: '3. 地坪', level: 3, state: 'leaf' },
];

const levelPad = ['pl-2', 'pl-7', 'pl-12', 'pl-[68px]'];

function ChapterTree() {
  return (
    <div className="flex w-[144px] shrink-0 flex-col border-r border-[#c3c6cb] bg-white">
      <label className="mx-0.5 mb-1 mt-1 flex h-[25px] shrink-0 items-center border-2 border-[#c3c6cb] pr-1">
        <input
          aria-label="搜索关键字"
          placeholder="搜索关键字..."
          className="w-full min-w-0 pt-px text-xs outline-none placeholder:text-[#808080]"
        />
        <Icon name="search" className="size-3" />
      </label>
      <div className="flex min-h-0 flex-1 border-t border-[#c3c6cb]">
        <ul className="min-w-0 flex-1 overflow-hidden text-black">
          {chapters.map((t) => (
            <li key={t.label} className={`flex h-[21px] items-center ${levelPad[t.level]}`}>
              <button className="flex items-center whitespace-nowrap">
                {t.state === 'open' && <Expanded />}
                {t.state === 'closed' && <Collapsed />}
                <span className={`h-[21px] leading-[21px] ${t.state === 'leaf' ? 'ml-2 px-1' : 'ml-[7px]'} ${t.on ? 'bg-[#c8d9f0]' : ''}`}>
                  {t.label}
                </span>
              </button>
            </li>
          ))}
        </ul>
        <div className="mr-1.5 w-2 pt-[13px]">
          <div className="h-[76px] rounded-full bg-[#cbcbcb]" />
        </div>
      </div>
    </div>
  );
}

function PracticePanel() {
  return (
    <section className="flex min-w-0 flex-1 flex-col border-l border-[#c3c6cb] bg-[#eeeeee]">
      <PanelHead title="构件做法" />
      <div className="flex h-[30px] shrink-0 items-center gap-3.5 border-b border-[#c3c6cb] pl-[3px] pr-[3px] text-[#333]">
        {practiceTools.map((t) => (
          <ToolButton key={t.label} {...t} />
        ))}
        <span className="ml-auto">
          <More />
        </span>
      </div>
      <div className="flex h-[231px] shrink-0 flex-col border-b border-[#c3c6cb] bg-white">
        <PracticeTable />
        <div className="mt-auto flex items-center pb-[3px] pl-0.5 pr-[3px]">
          <svg viewBox="0 0 5 8" className="h-2 w-[5px]" aria-hidden="true">
            <path d="M4.500 0v8L0 4z" fill="#222" />
          </svg>
          <div className="ml-0.5 h-2 w-[283px] rounded-full bg-[#cbcbcb]" />
          <svg viewBox="0 0 5 8" className="ml-auto h-2 w-[5px]" aria-hidden="true">
            <path d="M.5 0v8L5 4z" fill="#222" />
          </svg>
        </div>
      </div>
      <div className="flex h-[34px] shrink-0 items-end gap-[3px] border-b border-[#c3c6cb]">
        {['查询匹配清单', '查询匹配定额', '查询外部清单', '查询清单库', '查询定额库'].map((t) => {
          const active = t === '查询定额库';
          return (
            <div
              key={t}
              className={`flex items-center gap-2 whitespace-nowrap rounded-t-[3px] pr-[7px] ${
                active
                  ? 'h-[25px] border border-b-0 border-[#c3c6cb] bg-white pl-1 text-[#2d7fe3]'
                  : 'h-[22px] bg-[#dedede] pl-[3px] text-[#444]'
              }`}
            >
              <button className="pt-0.5 font-medium">{t}</button>
              <button aria-label={`关闭${t}`} className="pb-1">
                <svg viewBox="0 0 8 8" className="size-2" aria-hidden="true">
                  <path d="M.5 .5l7 7M7.500 .5l-7 7" stroke="#555" />
                </svg>
              </button>
            </div>
          );
        })}
        <div className="-ml-0.5 h-[29px] w-px bg-[#c3c6cb]" />
      </div>
      <div className="flex min-h-0 flex-1 pl-px">
        <ChapterTree />
        <div className="w-[5px]" />
        <QuotaTable />
      </div>
      <div className="flex h-[26px] shrink-0 items-center border-b border-t border-[#c3c6cb] pl-[5px] pr-0.5 text-[#222]">
        <span>定额库:</span>
        <Combo label="定额库" value="广东省建筑与装饰工程综合定额(2010)" className="ml-1 w-[325px]" />
        <span className="ml-1">专业:</span>
        <span className="ml-auto">
          <More />
        </span>
      </div>
      <div className="flex h-[11px] shrink-0 items-center justify-end pr-0.5">
        <svg viewBox="0 0 8 8" className="size-2" aria-hidden="true">
          <path d="M6 0h2v2H6zM3 3h2v2H3zM6 3h2v2H6zM0 6h2v2H0zM3 6h2v2H3zM6 6h2v2H6z" fill="#777" />
        </svg>
      </div>
    </section>
  );
}

function DefinitionDialog() {
  return (
    <div
      role="dialog"
      aria-label="定义"
      className="absolute bottom-[53px] left-[293px] right-[130px] top-[163px] flex flex-col bg-white shadow-[2px_2px_4px_rgba(0,0,0,0.5)]"
    >
      <div className="flex h-[27px] shrink-0 items-center bg-[#2d7fe3] px-2 text-white">
        <span>定义</span>
        <div className="ml-auto flex gap-4">
          <button aria-label="最小化">
            <svg viewBox="0 0 12 12" className="size-3">
              <path d="M2 8.500h8" stroke="#fff" strokeWidth="2" />
            </svg>
          </button>
          <button aria-label="最大化">
            <svg viewBox="0 0 12 12" className="size-3">
              <path d="M2.500 3h7v6h-7zM2 3h8" fill="none" stroke="#fff" strokeWidth="1.300" />
            </svg>
          </button>
          <button aria-label="关闭">
            <svg viewBox="0 0 12 12" className="size-3">
              <path d="M2.500 2.500l7 7M9.500 2.500l-7 7" stroke="#fff" strokeWidth="1.800" />
            </svg>
          </button>
        </div>
      </div>
      <div className="flex min-h-0 flex-1 flex-col border-2 border-t-0 border-[#c0c4cc]">
        <div className="flex h-[27px] shrink-0 items-center border-b border-[#c9ccd0] pl-px pt-px text-[#333]">
          <Combo label="楼层" value="基础层" className="w-[100px]" />
          <div className="ml-0.5 mr-2 h-4 w-px bg-[#c3c6cb]" />
          <div className="flex items-center gap-3">
            {dialogTools.map((t) => (
              <div key={t.label} className="flex items-center gap-[9px]">
                {t.sep && <div className="-ml-0.5 h-4 w-px bg-[#c3c6cb]" />}
                <ToolButton {...t} />
              </div>
            ))}
          </div>
        </div>
        <div className="flex min-h-0 flex-1 gap-1">
          <section className="flex w-[121px] shrink-0 flex-col border-r border-[#c3c6cb]">
            <PanelHead title="导航树" />
            <div className="flex min-h-0 flex-1 border-t border-[#c3c6cb]">
              <NavTree nodes={dialogTree} className="ml-1" />
              <div className="ml-1 mr-[5px] w-2 pt-[15px]">
                <div className="h-[496px] rounded-full bg-[#cbcbcb]" />
              </div>
            </div>
          </section>
          <div className="flex w-[598px] shrink-0 flex-col gap-1">
            <section className="flex h-[176px] shrink-0 flex-col border-x border-b border-[#c3c6cb]">
              <PanelHead title="构件列表" />
              <div className="flex h-[30px] shrink-0 items-center gap-3.5 border-b border-[#c3c6cb] bg-[#eeeeee] pl-[3px] text-[#333]">
                {[...editTools, { icon: 'copy', label: '复制' }].map((t) => (
                  <ToolButton key={t.label} {...t} />
                ))}
              </div>
              <label className="flex h-5 shrink-0 items-center border-b-2 border-[#c3c6cb] pr-[5px]">
                <input
                  aria-label="搜索构件"
                  placeholder="搜索构件..."
                  className="min-w-0 flex-1 px-0.5 text-xs outline-none placeholder:text-[#8a8a8a]"
                />
                <Icon name="search" className="size-3" />
              </label>
              <ComponentTree />
            </section>
            <section className="flex min-h-0 flex-1 flex-col border-x border-[#c3c6cb]">
              <PanelHead title="属性列表" />
              <PropertyTable />
            </section>
          </div>
          <PracticePanel />
        </div>
      </div>
    </div>
  );
}

export default function App() {
  return (
    <div className={`relative flex h-screen min-h-[600px] flex-col overflow-hidden bg-white text-xs ${uiFont}`}>
      <Header />
      <Ribbon />
      <FilterBar />
      <Workspace />
      <DefinitionDialog />
    </div>
  );
}
